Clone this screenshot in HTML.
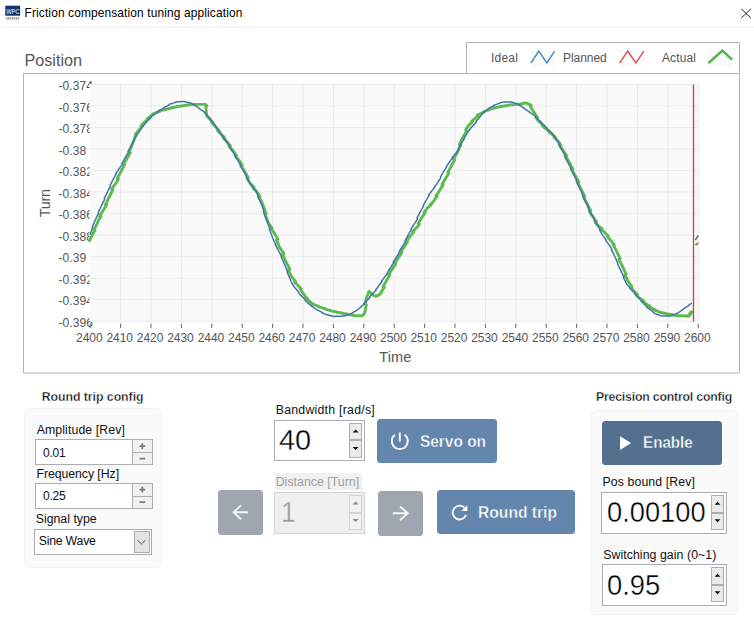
<!DOCTYPE html>
<html><head><meta charset="utf-8"><title>Friction compensation tuning application</title>
<style>
html,body{margin:0;padding:0;background:#fff;}
body{width:754px;height:619px;position:relative;overflow:hidden;font-family:"Liberation Sans",sans-serif;}
.t{position:absolute;white-space:nowrap;font-family:"Liberation Sans",sans-serif;}
.b{position:absolute;box-sizing:border-box;}
</style></head><body>
<svg id="chart" width="754" height="619" viewBox="0 0 754 619" style="position:absolute;left:0;top:0">
<path d="M23.5 73.5 H466.5 V42.5 H739.5 V373 H23.5 Z" fill="#fff" stroke="#b2b4bb" stroke-width="1"/>
<path d="M466.5 73.5 H739.5" stroke="#b2b4bb" stroke-width="1" fill="none"/>
</svg>
<div class="b" style="left:40px;top:76px;width:60px;height:260px;overflow:hidden">
<div class="t" style="left:18.5px;top:4.04px;font-size:12px;line-height:12px;color:#555;letter-spacing:0.08px">-0.374</div>
<div class="t" style="left:18.5px;top:25.56px;font-size:12px;line-height:12px;color:#555;letter-spacing:0.08px">-0.376</div>
<div class="t" style="left:18.5px;top:47.08px;font-size:12px;line-height:12px;color:#555;letter-spacing:0.08px">-0.378</div>
<div class="t" style="left:18.5px;top:68.60px;font-size:12px;line-height:12px;color:#555;letter-spacing:0.08px">-0.38</div>
<div class="t" style="left:18.5px;top:90.11px;font-size:12px;line-height:12px;color:#555;letter-spacing:0.08px">-0.382</div>
<div class="t" style="left:18.5px;top:111.63px;font-size:12px;line-height:12px;color:#555;letter-spacing:0.08px">-0.384</div>
<div class="t" style="left:18.5px;top:133.15px;font-size:12px;line-height:12px;color:#555;letter-spacing:0.08px">-0.386</div>
<div class="t" style="left:18.5px;top:154.67px;font-size:12px;line-height:12px;color:#555;letter-spacing:0.08px">-0.388</div>
<div class="t" style="left:18.5px;top:176.19px;font-size:12px;line-height:12px;color:#555;letter-spacing:0.08px">-0.39</div>
<div class="t" style="left:18.5px;top:197.71px;font-size:12px;line-height:12px;color:#555;letter-spacing:0.08px">-0.392</div>
<div class="t" style="left:18.5px;top:219.22px;font-size:12px;line-height:12px;color:#555;letter-spacing:0.08px">-0.394</div>
<div class="t" style="left:18.5px;top:240.74px;font-size:12px;line-height:12px;color:#555;letter-spacing:0.08px">-0.396</div>
</div>
<svg id="plot" width="754" height="619" viewBox="0 0 754 619" style="position:absolute;left:0;top:0">
<rect x="89.5" y="84.5" width="609.2" height="236.70" fill="#fafafa"/>
<path d="M120.60 84.5 V321.2 M151.00 84.5 V321.2 M181.40 84.5 V321.2 M211.80 84.5 V321.2 M242.20 84.5 V321.2 M272.60 84.5 V321.2 M303.00 84.5 V321.2 M333.40 84.5 V321.2 M363.80 84.5 V321.2 M394.20 84.5 V321.2 M424.60 84.5 V321.2 M455.00 84.5 V321.2 M485.40 84.5 V321.2 M515.80 84.5 V321.2 M546.20 84.5 V321.2 M576.60 84.5 V321.2 M607.00 84.5 V321.2 M637.40 84.5 V321.2 M667.80 84.5 V321.2 M698.20 84.5 V321.2 M89.5 84.50 H698.7 M89.5 106.02 H698.7 M89.5 127.54 H698.7 M89.5 149.05 H698.7 M89.5 170.57 H698.7 M89.5 192.09 H698.7 M89.5 213.61 H698.7 M89.5 235.13 H698.7 M89.5 256.65 H698.7 M89.5 278.16 H698.7 M89.5 299.68 H698.7 M89.5 321.20 H698.7" stroke="#eaeaea" stroke-width="1" fill="none"/>
<path d="M90.20 323.6 V328.1 M120.60 323.6 V328.1 M151.00 323.6 V328.1 M181.40 323.6 V328.1 M211.80 323.6 V328.1 M242.20 323.6 V328.1 M272.60 323.6 V328.1 M303.00 323.6 V328.1 M333.40 323.6 V328.1 M363.80 323.6 V328.1 M394.20 323.6 V328.1 M424.60 323.6 V328.1 M455.00 323.6 V328.1 M485.40 323.6 V328.1 M515.80 323.6 V328.1 M546.20 323.6 V328.1 M576.60 323.6 V328.1 M607.00 323.6 V328.1 M637.40 323.6 V328.1 M667.80 323.6 V328.1 M698.20 323.6 V328.1" stroke="#666" stroke-width="1" fill="none"/>
<path d="M89.6 240.5 L89.9 239.9 L90.2 239.3 L90.5 238.8 L90.8 238.2 L91.0 237.6 L91.3 237.1 L91.6 236.5 L91.9 235.9 L92.2 235.3 L92.5 234.8 L92.7 234.2 L93.0 233.6 L93.3 233.0 L93.7 232.5 L94.0 231.9 L94.3 231.3 L94.7 230.7 L95.0 230.2 L93.8 229.6 L94.2 229.0 L94.5 228.5 L94.8 227.9 L95.2 227.3 L95.5 226.7 L95.8 226.2 L96.2 225.6 L96.4 225.0 L96.7 224.4 L96.9 223.9 L97.2 223.3 L97.5 222.7 L97.7 222.1 L98.0 221.5 L98.3 221.0 L98.5 220.4 L98.8 219.8 L99.1 219.2 L99.5 218.7 L99.8 218.2 L100.2 217.6 L100.5 217.1 L100.9 216.5 L99.7 216.0 L100.1 215.4 L100.4 214.8 L100.7 214.3 L101.1 213.8 L101.4 213.2 L101.8 212.7 L102.1 212.1 L102.5 211.6 L102.8 211.0 L103.2 210.4 L103.5 209.9 L103.9 209.3 L104.2 208.8 L104.5 208.2 L104.9 207.7 L105.2 207.1 L105.6 206.6 L105.9 206.0 L106.3 205.5 L106.6 204.9 L105.5 204.4 L105.8 203.8 L106.1 203.2 L106.4 202.7 L106.7 202.1 L106.9 201.6 L107.2 201.0 L107.5 200.4 L107.8 199.9 L108.1 199.3 L108.3 198.7 L108.6 198.2 L108.9 197.6 L109.2 197.1 L109.5 196.5 L109.7 195.9 L110.0 195.4 L110.3 194.8 L110.6 194.3 L110.9 193.7 L111.1 193.1 L111.4 192.6 L111.7 192.0 L112.0 191.4 L112.3 190.9 L112.5 190.3 L112.8 189.8 L111.6 189.2 L112.0 188.7 L112.4 188.1 L112.8 187.6 L113.1 187.0 L113.5 186.5 L113.9 185.9 L114.3 185.4 L114.7 184.9 L115.1 184.3 L115.5 183.8 L115.9 183.2 L116.2 182.7 L116.6 182.1 L116.9 181.6 L117.2 181.0 L117.5 180.4 L117.9 179.8 L118.2 179.3 L118.5 178.7 L117.3 178.1 L117.6 177.6 L118.0 177.0 L118.3 176.4 L118.6 175.8 L118.9 175.3 L119.3 174.7 L119.6 174.1 L119.9 173.5 L120.2 173.0 L120.5 172.4 L120.8 171.8 L121.1 171.2 L121.4 170.6 L121.7 170.1 L122.0 169.5 L122.4 168.9 L122.7 168.3 L123.0 167.7 L123.3 167.2 L123.6 166.6 L123.9 166.0 L124.2 165.4 L124.6 164.9 L123.4 164.3 L123.8 163.8 L124.1 163.2 L124.5 162.6 L124.8 162.1 L125.2 161.5 L125.5 160.9 L125.9 160.4 L126.2 159.8 L126.6 159.3 L126.9 158.7 L127.2 158.1 L127.5 157.6 L127.8 157.0 L128.1 156.5 L128.5 155.9 L128.8 155.4 L129.1 154.8 L129.4 154.3 L129.7 153.7 L130.0 153.2 L130.3 152.6 L129.1 152.1 L129.4 151.5 L129.7 150.9 L129.9 150.3 L130.1 149.8 L130.3 149.2 L130.6 148.6 L130.8 148.0 L131.0 147.4 L131.2 146.8 L131.5 146.3 L131.7 145.7 L131.9 145.1 L132.2 144.5 L132.4 143.9 L132.6 143.4 L132.8 142.8 L133.1 142.2 L133.3 141.6 L133.5 141.0 L133.8 140.5 L134.0 139.9 L134.2 139.3 L134.4 138.7 L134.7 138.1 L134.9 137.5 L135.1 137.0 L135.3 136.4 L135.6 135.8 L136.0 135.3 L136.4 134.8 L135.3 134.3 L135.8 133.8 L136.2 133.3 L136.6 132.8 L137.0 132.3 L137.4 131.8 L137.9 131.3 L138.3 130.8 L138.7 130.3 L139.1 129.8 L139.6 129.3 L140.0 128.8 L140.4 128.3 L140.8 127.8 L141.2 127.3 L141.7 126.8 L142.1 126.3 L141.0 125.8 L141.4 125.3 L141.8 124.8 L142.3 124.3 L142.7 123.8 L143.1 123.3 L143.7 122.9 L144.2 122.4 L144.8 122.0 L145.3 121.5 L145.9 121.1 L146.4 120.6 L147.0 120.2 L147.5 119.8 L148.1 119.3 L147.2 118.9 L147.7 118.4 L148.3 118.0 L148.8 117.6 L149.4 117.1 L149.9 116.7 L150.5 116.2 L151.0 115.8 L151.6 115.3 L152.1 114.9 L152.8 114.6 L153.5 114.3 L152.7 114.1 L153.4 113.8 L154.1 113.5 L154.8 113.2 L155.5 112.9 L156.2 112.7 L156.9 112.4 L157.6 112.1 L158.3 111.8 L159.0 111.5 L159.7 111.3 L158.9 111.0 L159.6 110.7 L160.3 110.6 L161.1 110.4 L161.8 110.3 L162.6 110.1 L163.3 110.0 L164.1 109.8 L164.8 109.7 L165.6 109.6 L164.8 109.4 L165.6 109.3 L166.3 109.1 L167.1 109.0 L167.8 108.8 L168.6 108.7 L169.3 108.5 L170.1 108.4 L170.8 108.2 L171.6 108.1 L170.8 108.0 L171.6 107.8 L172.3 107.7 L173.0 107.5 L173.8 107.3 L174.5 107.2 L175.3 107.0 L176.0 106.9 L176.8 106.8 L177.5 106.6 L176.8 106.5 L177.5 106.4 L178.3 106.3 L179.0 106.3 L179.8 106.2 L180.5 106.1 L181.3 106.0 L182.0 105.9 L182.8 105.8 L183.5 105.7 L182.8 105.7 L183.5 105.6 L184.3 105.5 L185.0 105.4 L185.8 105.3 L186.6 105.2 L187.3 105.1 L188.1 105.0 L188.9 104.9 L188.1 104.9 L188.9 104.8 L189.6 104.7 L190.4 104.6 L191.2 104.5 L191.9 104.4 L192.7 104.4 L193.5 104.4 L194.2 104.4 L195.0 104.4 L194.2 104.4 L195.0 104.4 L195.7 104.4 L196.5 104.4 L197.3 104.4 L198.0 104.4 L198.8 104.4 L199.5 104.4 L200.3 104.4 L201.1 104.4 L200.3 104.4 L201.1 104.4 L201.8 104.4 L202.6 104.4 L203.3 104.4 L204.1 104.4 L204.9 104.4 L205.6 104.4 L206.1 105.0 L206.5 105.5 L206.9 106.0 L205.9 106.6 L205.9 107.2 L206.0 107.8 L206.0 108.4 L206.1 109.1 L206.1 109.7 L206.2 110.3 L206.2 110.9 L206.3 111.5 L206.3 112.1 L206.4 112.7 L206.4 113.3 L206.5 114.0 L206.5 114.6 L206.6 115.2 L206.6 115.8 L207.1 116.3 L207.6 116.8 L208.0 117.3 L208.5 117.8 L209.0 118.2 L209.5 118.7 L209.9 119.2 L210.4 119.7 L210.9 120.2 L211.3 120.7 L211.8 121.2 L212.3 121.7 L212.8 122.1 L211.7 122.6 L212.2 123.1 L212.7 123.6 L213.2 124.1 L213.6 124.6 L214.1 125.1 L214.6 125.6 L215.0 126.1 L215.5 126.7 L216.0 127.2 L216.4 127.7 L216.9 128.2 L217.4 128.7 L217.8 129.2 L218.3 129.7 L218.8 130.2 L217.7 130.7 L218.2 131.3 L218.7 131.8 L219.1 132.3 L219.6 132.8 L220.1 133.3 L220.6 133.8 L221.0 134.3 L221.5 134.8 L222.0 135.3 L222.5 135.8 L223.0 136.3 L223.5 136.8 L224.0 137.3 L224.5 137.7 L223.5 138.2 L224.0 138.7 L224.5 139.2 L225.0 139.7 L225.5 140.2 L226.0 140.7 L226.5 141.2 L227.0 141.7 L227.4 142.2 L227.8 142.8 L228.3 143.3 L228.7 143.8 L229.1 144.3 L229.6 144.9 L230.0 145.4 L230.4 145.9 L229.4 146.4 L229.8 147.0 L230.3 147.5 L230.7 148.0 L231.1 148.5 L231.6 149.1 L232.0 149.6 L232.4 150.1 L232.9 150.6 L233.3 151.2 L233.7 151.7 L234.1 152.2 L234.5 152.7 L234.9 153.2 L235.3 153.8 L235.7 154.3 L236.1 154.8 L236.5 155.3 L235.4 155.8 L235.8 156.3 L236.2 156.8 L236.6 157.4 L237.0 157.9 L237.4 158.4 L237.8 158.9 L238.2 159.4 L238.6 159.9 L239.0 160.4 L239.4 161.0 L239.8 161.5 L240.2 162.0 L240.6 162.5 L241.0 163.1 L241.3 163.6 L241.7 164.2 L242.0 164.7 L242.4 165.3 L241.2 165.9 L241.5 166.4 L241.9 167.0 L242.2 167.5 L242.6 168.1 L242.9 168.7 L243.3 169.2 L243.6 169.8 L243.9 170.3 L244.3 170.9 L244.6 171.5 L244.9 172.0 L245.3 172.6 L245.6 173.2 L245.9 173.7 L246.3 174.3 L246.6 174.9 L246.9 175.4 L247.3 176.0 L247.6 176.6 L247.9 177.2 L248.3 177.7 L247.1 178.3 L247.4 178.9 L247.7 179.4 L248.1 180.0 L248.4 180.6 L248.7 181.1 L249.1 181.7 L249.4 182.3 L249.7 182.8 L250.1 183.4 L250.6 183.9 L251.0 184.4 L251.5 184.9 L252.0 185.4 L252.5 185.9 L253.0 186.4 L253.5 186.9 L254.0 187.4 L253.0 187.8 L253.5 188.3 L254.0 188.8 L254.5 189.3 L255.0 189.8 L255.5 190.3 L256.0 190.8 L256.5 191.3 L257.0 191.8 L257.3 192.4 L257.7 192.9 L258.0 193.5 L258.4 194.0 L258.7 194.6 L259.1 195.1 L259.4 195.7 L259.8 196.2 L260.1 196.8 L258.9 197.4 L259.3 197.9 L259.6 198.5 L260.0 199.0 L260.3 199.6 L260.7 200.1 L261.0 200.7 L261.4 201.2 L261.7 201.8 L262.0 202.4 L262.2 203.0 L262.4 203.6 L262.6 204.2 L262.9 204.8 L263.1 205.4 L263.3 206.0 L263.5 206.6 L263.8 207.2 L264.0 207.8 L264.2 208.4 L264.4 209.0 L264.6 209.6 L264.9 210.2 L265.1 210.8 L265.3 211.4 L265.6 211.9 L265.8 212.5 L266.0 213.1 L266.2 213.7 L265.0 214.2 L265.2 214.8 L265.4 215.4 L265.7 216.0 L265.9 216.6 L266.1 217.1 L266.3 217.7 L266.6 218.3 L266.8 218.9 L267.0 219.5 L267.3 220.0 L267.5 220.6 L267.7 221.2 L268.0 221.8 L268.2 222.3 L268.4 222.9 L268.6 223.5 L269.1 224.0 L269.5 224.6 L269.9 225.1 L270.3 225.6 L270.7 226.2 L271.1 226.7 L271.5 227.2 L272.0 227.7 L270.9 228.3 L271.3 228.8 L271.7 229.3 L272.1 229.9 L272.5 230.4 L272.9 231.0 L273.2 231.5 L273.6 232.1 L273.9 232.6 L274.2 233.2 L274.6 233.7 L274.9 234.3 L275.3 234.8 L275.6 235.4 L276.0 235.9 L276.3 236.5 L276.6 237.0 L277.0 237.6 L277.3 238.1 L277.7 238.7 L277.9 239.3 L276.6 239.9 L276.8 240.5 L277.1 241.1 L277.3 241.7 L277.5 242.3 L277.7 242.9 L278.0 243.5 L278.2 244.1 L278.4 244.7 L278.6 245.3 L278.9 245.9 L279.1 246.5 L279.3 247.1 L279.7 247.6 L280.1 248.2 L280.5 248.7 L280.9 249.2 L281.2 249.7 L281.6 250.3 L282.0 250.8 L282.4 251.3 L282.8 251.8 L283.2 252.4 L283.6 252.9 L283.8 253.5 L282.6 254.1 L282.8 254.6 L283.0 255.2 L283.3 255.8 L283.5 256.4 L283.8 256.9 L284.0 257.5 L284.2 258.1 L284.5 258.7 L284.7 259.2 L285.0 259.8 L285.2 260.4 L285.5 261.0 L285.8 261.6 L286.2 262.2 L286.5 262.7 L286.8 263.3 L287.1 263.9 L287.4 264.5 L287.8 265.1 L288.1 265.7 L288.4 266.2 L288.7 266.8 L289.0 267.4 L289.3 268.0 L289.6 268.6 L289.8 269.2 L288.6 269.7 L288.8 270.3 L289.1 270.9 L289.3 271.5 L289.5 272.0 L289.8 272.6 L290.0 273.2 L290.3 273.8 L290.5 274.3 L290.7 274.9 L291.0 275.5 L291.4 276.0 L291.8 276.6 L292.1 277.1 L292.5 277.6 L292.9 278.1 L293.3 278.7 L293.7 279.2 L294.1 279.7 L294.5 280.2 L294.9 280.8 L295.2 281.3 L295.7 281.8 L294.7 282.3 L295.2 282.8 L295.7 283.3 L296.2 283.8 L296.7 284.3 L297.2 284.8 L297.7 285.3 L298.2 285.7 L298.7 286.2 L299.2 286.7 L299.7 287.2 L300.2 287.7 L300.7 288.2 L301.2 288.7 L300.2 289.2 L300.7 289.7 L301.0 290.2 L301.4 290.8 L301.8 291.3 L302.1 291.8 L302.5 292.4 L302.9 292.9 L303.2 293.4 L303.6 294.0 L304.0 294.5 L304.3 295.1 L304.7 295.6 L305.1 296.1 L305.4 296.7 L305.8 297.2 L306.4 297.6 L306.9 298.1 L307.5 298.5 L306.5 299.0 L307.1 299.4 L307.7 299.9 L308.2 300.3 L308.8 300.8 L309.3 301.2 L309.9 301.7 L310.5 302.1 L311.0 302.6 L311.6 303.0 L312.1 303.5 L312.7 303.9 L313.4 304.1 L312.6 304.3 L313.3 304.6 L314.0 304.8 L314.7 305.0 L315.4 305.2 L316.1 305.4 L316.8 305.7 L317.5 305.9 L318.2 306.1 L318.9 306.3 L318.1 306.5 L318.8 306.8 L319.5 307.0 L320.2 307.2 L321.0 307.4 L321.7 307.6 L322.5 307.8 L323.2 308.1 L324.0 308.3 L324.7 308.5 L323.9 308.7 L324.7 308.9 L325.4 309.1 L326.2 309.3 L326.9 309.6 L327.7 309.8 L328.4 310.0 L329.1 310.2 L329.9 310.3 L330.6 310.5 L329.9 310.6 L330.7 310.8 L331.4 310.9 L332.2 311.1 L332.9 311.2 L333.7 311.3 L334.4 311.5 L335.2 311.6 L335.9 311.8 L336.7 311.9 L335.9 312.1 L336.7 312.2 L337.4 312.3 L338.2 312.4 L338.9 312.6 L339.7 312.7 L340.4 312.8 L341.2 312.9 L341.9 313.0 L342.7 313.2 L342.0 313.3 L342.7 313.4 L343.5 313.5 L344.2 313.7 L345.0 313.8 L345.7 313.9 L346.5 314.0 L347.2 314.1 L347.9 314.3 L348.7 314.4 L347.9 314.5 L348.7 314.6 L349.4 314.8 L350.2 314.9 L350.9 315.0 L351.7 315.1 L352.4 315.2 L353.1 315.4 L353.9 315.5 L354.6 315.6 L353.9 315.6 L354.6 315.6 L355.4 315.7 L356.1 315.7 L356.9 315.7 L357.6 315.7 L358.4 315.8 L359.1 315.8 L359.9 315.8 L360.6 315.8 L359.9 315.8 L360.7 315.9 L361.4 315.9 L362.2 315.9 L362.7 315.3 L363.2 314.8 L363.7 314.2 L364.2 313.7 L364.7 313.1 L364.8 312.5 L364.9 311.9 L365.0 311.3 L365.2 310.7 L365.3 310.1 L365.4 309.5 L365.5 308.9 L365.7 308.3 L365.8 307.7 L365.9 307.1 L366.0 306.5 L366.2 305.9 L366.3 305.3 L366.4 304.7 L365.1 304.1 L365.2 303.5 L365.3 302.9 L365.4 302.3 L365.6 301.7 L365.7 301.1 L365.8 300.5 L366.0 299.9 L366.2 299.3 L366.4 298.7 L366.6 298.1 L366.8 297.5 L367.1 296.9 L367.3 296.3 L367.5 295.6 L367.7 295.0 L367.9 294.4 L368.1 293.8 L368.3 293.2 L368.5 292.6 L368.7 292.0 L368.9 291.4 L369.5 291.8 L370.0 292.2 L370.6 292.6 L371.1 293.1 L371.7 293.5 L372.2 293.9 L371.3 294.2 L372.0 294.5 L372.6 294.8 L373.3 295.1 L373.9 295.5 L374.6 295.8 L375.2 296.1 L375.8 296.4 L376.6 296.2 L377.3 295.9 L378.1 295.7 L377.4 295.4 L378.1 295.2 L378.9 294.9 L379.6 294.7 L380.0 294.1 L380.3 293.6 L380.7 293.0 L381.0 292.5 L381.4 291.9 L381.7 291.3 L382.1 290.8 L382.4 290.2 L382.8 289.7 L383.1 289.1 L383.5 288.5 L383.8 288.0 L384.2 287.4 L383.0 286.9 L383.4 286.3 L383.7 285.7 L384.0 285.2 L384.3 284.6 L384.6 284.0 L384.9 283.4 L385.3 282.9 L385.6 282.3 L385.9 281.7 L386.2 281.1 L386.5 280.6 L386.8 280.0 L387.1 279.4 L387.5 278.8 L387.8 278.2 L388.1 277.7 L388.4 277.1 L388.8 276.6 L389.1 276.0 L389.5 275.5 L389.8 275.0 L388.7 274.4 L389.0 273.9 L389.4 273.4 L389.8 272.8 L390.1 272.3 L390.5 271.8 L390.8 271.2 L391.2 270.7 L391.5 270.2 L391.9 269.6 L392.3 269.1 L392.6 268.6 L393.0 268.0 L393.3 267.5 L393.7 267.0 L394.0 266.4 L394.4 265.9 L394.8 265.4 L395.1 264.8 L395.5 264.3 L395.8 263.8 L394.7 263.2 L395.0 262.7 L395.4 262.2 L395.8 261.6 L396.1 261.1 L396.5 260.6 L396.8 260.0 L397.2 259.5 L397.5 259.0 L397.9 258.4 L398.3 257.9 L398.6 257.4 L399.0 256.8 L399.3 256.3 L399.7 255.8 L400.0 255.2 L400.4 254.7 L400.8 254.2 L401.1 253.6 L401.5 253.1 L401.8 252.6 L400.7 252.0 L401.0 251.5 L401.4 251.0 L401.8 250.4 L402.1 249.9 L402.5 249.4 L402.8 248.8 L403.2 248.3 L403.5 247.8 L403.9 247.2 L404.3 246.7 L404.6 246.2 L405.0 245.6 L405.3 245.1 L405.7 244.6 L406.0 244.0 L406.4 243.5 L406.8 243.0 L407.1 242.4 L407.5 241.9 L406.4 241.4 L406.8 240.9 L407.1 240.3 L407.5 239.8 L407.9 239.3 L408.3 238.8 L408.7 238.3 L409.1 237.8 L409.5 237.2 L409.9 236.7 L410.3 236.2 L410.7 235.7 L411.1 235.2 L411.5 234.6 L411.9 234.1 L412.2 233.6 L412.7 233.1 L413.2 232.6 L413.7 232.1 L412.7 231.6 L413.2 231.1 L413.7 230.6 L414.1 230.1 L414.6 229.6 L415.1 229.1 L415.6 228.6 L416.1 228.1 L416.6 227.6 L417.0 227.1 L417.5 226.6 L418.0 226.1 L418.4 225.5 L418.7 225.0 L419.1 224.4 L419.4 223.9 L418.3 223.3 L418.6 222.7 L419.0 222.2 L419.3 221.6 L419.7 221.1 L420.0 220.5 L420.4 219.9 L420.7 219.4 L421.0 218.8 L421.4 218.2 L421.7 217.7 L422.1 217.1 L422.4 216.6 L422.8 216.0 L423.2 215.5 L423.6 215.0 L424.0 214.4 L424.4 213.9 L424.8 213.4 L425.2 212.9 L424.1 212.4 L424.5 211.8 L424.9 211.3 L425.3 210.8 L425.7 210.3 L426.1 209.8 L426.5 209.3 L426.9 208.7 L427.3 208.2 L427.7 207.7 L428.3 207.2 L428.8 206.8 L429.4 206.3 L430.0 205.9 L430.5 205.4 L431.1 205.0 L430.2 204.5 L430.7 204.1 L431.3 203.6 L431.9 203.2 L432.5 202.7 L432.8 202.2 L433.2 201.6 L433.6 201.1 L434.0 200.6 L434.4 200.0 L434.8 199.5 L435.1 199.0 L435.5 198.4 L435.9 197.9 L436.3 197.4 L436.7 196.9 L437.1 196.3 L435.9 195.8 L436.3 195.3 L436.7 194.7 L437.1 194.2 L437.5 193.7 L437.9 193.1 L438.2 192.6 L438.6 192.0 L438.9 191.5 L439.3 190.9 L439.6 190.4 L440.0 189.8 L440.3 189.3 L440.7 188.7 L441.0 188.2 L441.4 187.6 L441.7 187.0 L442.1 186.5 L442.4 185.9 L442.8 185.4 L443.1 184.8 L442.0 184.3 L442.3 183.7 L442.7 183.2 L443.0 182.6 L443.4 182.0 L443.7 181.5 L444.0 180.9 L444.4 180.4 L444.7 179.8 L445.1 179.3 L445.4 178.7 L445.8 178.2 L446.1 177.6 L446.5 177.0 L446.8 176.5 L447.2 175.9 L447.5 175.4 L447.9 174.8 L448.2 174.3 L448.6 173.7 L448.9 173.2 L447.8 172.6 L448.1 172.0 L448.4 171.5 L448.7 170.9 L449.0 170.3 L449.3 169.8 L449.6 169.2 L449.9 168.6 L450.2 168.1 L450.5 167.5 L450.8 167.0 L451.1 166.4 L451.4 165.8 L451.7 165.3 L452.0 164.7 L452.3 164.1 L452.6 163.6 L452.9 163.0 L453.2 162.4 L453.5 161.9 L453.8 161.3 L454.2 160.8 L454.5 160.2 L454.8 159.7 L453.6 159.1 L453.9 158.6 L454.2 158.0 L454.5 157.5 L454.8 156.9 L455.1 156.4 L455.5 155.8 L455.8 155.3 L456.1 154.7 L456.4 154.2 L456.7 153.6 L457.0 153.1 L457.3 152.5 L457.6 151.9 L457.8 151.4 L458.1 150.8 L458.4 150.2 L458.6 149.7 L458.9 149.1 L459.1 148.5 L459.4 148.0 L459.7 147.4 L459.9 146.8 L460.2 146.3 L460.4 145.7 L460.7 145.1 L459.5 144.5 L459.7 144.0 L460.0 143.4 L460.2 142.8 L460.5 142.3 L460.8 141.7 L461.0 141.1 L461.3 140.6 L461.6 140.0 L461.8 139.4 L462.1 138.9 L462.3 138.3 L462.7 137.8 L463.0 137.2 L463.3 136.7 L463.6 136.1 L463.9 135.6 L464.3 135.0 L464.6 134.5 L464.9 134.0 L465.2 133.4 L465.6 132.9 L465.9 132.3 L466.2 131.8 L466.5 131.2 L466.8 130.7 L465.7 130.1 L466.0 129.6 L466.3 129.1 L466.6 128.5 L466.9 128.0 L467.3 127.4 L467.6 126.9 L467.9 126.3 L468.2 125.8 L468.8 125.3 L469.3 124.9 L469.8 124.4 L470.3 123.9 L470.9 123.5 L471.4 123.0 L471.9 122.5 L472.4 122.0 L471.5 121.6 L472.0 121.1 L472.5 120.6 L473.0 120.2 L473.6 119.7 L474.1 119.2 L474.6 118.8 L475.1 118.3 L475.7 117.8 L476.3 117.3 L476.9 116.8 L477.5 116.4 L478.1 115.9 L477.2 115.4 L477.8 114.9 L478.5 114.6 L479.2 114.3 L479.9 114.0 L480.6 113.7 L481.3 113.4 L482.0 113.1 L482.7 112.8 L483.4 112.5 L484.1 112.2 L483.3 111.9 L484.0 111.6 L484.7 111.3 L485.4 111.0 L486.1 110.7 L486.8 110.4 L487.6 110.2 L488.3 110.0 L489.0 109.8 L489.8 109.6 L489.0 109.4 L489.8 109.2 L490.5 109.1 L491.3 108.9 L492.0 108.7 L492.7 108.5 L493.5 108.3 L494.2 108.1 L495.0 107.9 L495.7 107.7 L495.0 107.6 L495.7 107.5 L496.5 107.4 L497.2 107.2 L498.0 107.1 L498.7 107.0 L499.5 106.9 L500.2 106.8 L501.0 106.7 L501.7 106.6 L501.0 106.4 L501.8 106.3 L502.5 106.2 L503.3 106.1 L504.0 106.0 L504.7 105.9 L505.5 105.8 L506.2 105.7 L507.0 105.6 L507.7 105.5 L507.0 105.4 L507.7 105.3 L508.5 105.2 L509.2 105.1 L509.9 105.0 L510.7 104.9 L511.4 104.8 L512.2 104.7 L512.9 104.7 L513.7 104.6 L512.9 104.6 L513.7 104.5 L514.4 104.5 L515.2 104.4 L515.9 104.4 L516.7 104.4 L517.4 104.3 L518.2 104.3 L518.9 104.2 L519.7 104.2 L519.0 104.1 L519.7 104.1 L520.5 103.9 L521.3 103.8 L522.1 103.6 L522.9 103.5 L523.7 103.3 L524.6 103.2 L525.4 103.0 L524.7 102.9 L525.5 102.7 L526.2 103.0 L527.0 103.3 L527.7 103.6 L528.5 104.0 L529.2 104.3 L530.0 104.6 L530.7 104.9 L531.1 105.5 L531.4 106.0 L530.3 106.6 L530.7 107.1 L531.0 107.7 L531.4 108.2 L531.7 108.8 L532.1 109.3 L532.4 109.9 L532.8 110.4 L533.1 111.0 L533.5 111.5 L533.8 112.1 L534.2 112.6 L534.5 113.2 L534.9 113.7 L535.3 114.3 L535.6 114.8 L536.0 115.4 L536.4 115.9 L536.8 116.5 L537.1 117.0 L537.5 117.5 L536.4 118.1 L536.8 118.6 L537.2 119.2 L537.5 119.7 L537.9 120.3 L538.3 120.8 L538.8 121.3 L539.3 121.7 L539.9 122.2 L540.4 122.7 L540.9 123.1 L541.4 123.6 L542.0 124.1 L542.5 124.6 L543.0 125.0 L543.5 125.5 L542.6 126.0 L543.1 126.4 L543.6 126.9 L544.1 127.4 L544.7 127.8 L545.2 128.3 L545.8 128.7 L546.4 129.1 L547.0 129.5 L547.6 130.0 L548.1 130.4 L548.7 130.8 L549.3 131.2 L548.4 131.6 L549.0 132.0 L549.6 132.4 L550.2 132.9 L550.8 133.3 L551.4 133.7 L552.0 134.1 L552.5 134.6 L553.0 135.1 L553.5 135.5 L554.1 136.0 L554.6 136.5 L555.1 137.0 L554.2 137.4 L554.7 137.9 L555.2 138.4 L555.7 138.9 L556.3 139.4 L556.8 139.8 L557.3 140.3 L557.9 140.8 L558.2 141.3 L558.6 141.9 L559.0 142.4 L559.4 142.9 L559.7 143.5 L560.1 144.0 L560.5 144.6 L560.9 145.1 L559.8 145.6 L560.1 146.2 L560.5 146.7 L560.9 147.2 L561.3 147.8 L561.6 148.3 L562.0 148.8 L562.4 149.4 L562.7 149.9 L563.1 150.5 L563.5 151.0 L563.8 151.5 L564.2 152.1 L564.6 152.6 L565.0 153.2 L565.3 153.7 L565.7 154.3 L566.1 154.8 L566.4 155.3 L566.8 155.9 L565.7 156.4 L566.0 157.0 L566.4 157.5 L566.7 158.1 L567.1 158.7 L567.4 159.3 L567.8 159.9 L568.1 160.5 L568.5 161.0 L568.8 161.6 L569.1 162.2 L569.5 162.8 L569.8 163.4 L570.2 164.0 L570.5 164.6 L570.8 165.1 L571.1 165.7 L571.4 166.2 L571.7 166.8 L572.0 167.3 L572.4 167.8 L572.7 168.4 L573.0 168.9 L571.8 169.5 L572.1 170.0 L572.4 170.6 L572.7 171.1 L573.1 171.7 L573.4 172.3 L573.7 172.8 L574.0 173.4 L574.3 173.9 L574.6 174.5 L574.9 175.0 L575.2 175.6 L575.5 176.2 L575.8 176.7 L576.1 177.3 L576.4 177.8 L576.8 178.4 L577.1 179.0 L577.4 179.5 L577.7 180.1 L578.0 180.6 L578.3 181.2 L578.6 181.8 L578.9 182.3 L577.7 182.9 L578.0 183.4 L578.3 184.0 L578.6 184.5 L579.0 185.1 L579.2 185.7 L579.5 186.2 L579.8 186.8 L580.1 187.4 L580.4 187.9 L580.7 188.5 L581.0 189.1 L581.3 189.6 L581.6 190.2 L581.9 190.8 L582.2 191.3 L582.4 191.9 L582.7 192.5 L583.0 193.1 L583.3 193.6 L583.6 194.2 L583.9 194.8 L584.2 195.3 L584.5 195.9 L584.8 196.5 L583.6 197.0 L583.9 197.6 L584.1 198.2 L584.4 198.7 L584.7 199.3 L585.0 199.9 L585.3 200.4 L585.6 201.0 L585.9 201.6 L586.2 202.1 L586.5 202.7 L586.8 203.3 L587.1 203.8 L587.4 204.4 L587.7 205.0 L588.0 205.5 L588.3 206.1 L588.6 206.7 L588.9 207.3 L589.2 207.8 L589.5 208.4 L589.8 209.0 L590.1 209.5 L590.4 210.1 L590.6 210.7 L589.4 211.2 L589.7 211.8 L590.0 212.4 L590.3 212.9 L590.6 213.5 L591.0 214.0 L591.4 214.6 L591.8 215.1 L592.2 215.6 L592.5 216.2 L592.9 216.7 L593.3 217.2 L593.7 217.8 L594.1 218.3 L594.4 218.8 L594.8 219.3 L595.2 219.9 L595.6 220.4 L596.0 220.9 L596.4 221.5 L595.2 222.0 L595.6 222.5 L596.0 223.1 L596.4 223.6 L596.8 224.1 L597.2 224.7 L597.5 225.2 L598.1 225.6 L598.7 226.1 L599.2 226.5 L599.8 227.0 L600.3 227.4 L600.9 227.9 L601.5 228.3 L602.0 228.8 L601.1 229.2 L601.6 229.7 L602.2 230.1 L602.7 230.6 L603.3 231.0 L603.8 231.5 L604.3 232.0 L604.8 232.5 L605.2 233.0 L605.7 233.5 L606.2 234.0 L606.7 234.5 L607.2 235.0 L607.7 235.5 L608.2 236.0 L607.1 236.5 L607.6 237.0 L608.1 237.5 L608.6 238.0 L609.1 238.5 L609.5 239.0 L609.9 239.5 L610.4 240.0 L610.8 240.5 L611.2 241.0 L611.6 241.5 L612.1 242.0 L612.5 242.6 L612.9 243.1 L613.3 243.6 L613.8 244.1 L614.2 244.6 L613.1 245.1 L613.6 245.6 L614.0 246.1 L614.3 246.7 L614.5 247.2 L614.8 247.8 L615.1 248.4 L615.4 248.9 L615.6 249.5 L615.9 250.1 L616.2 250.6 L616.5 251.2 L616.8 251.7 L617.0 252.3 L617.3 252.9 L617.6 253.4 L617.9 254.0 L618.2 254.6 L618.4 255.1 L618.7 255.7 L619.0 256.3 L619.3 256.9 L619.6 257.4 L619.9 258.0 L620.2 258.6 L618.9 259.1 L619.2 259.7 L619.5 260.3 L619.8 260.9 L620.1 261.4 L620.4 262.0 L620.7 262.6 L620.9 263.2 L621.2 263.7 L621.5 264.3 L621.8 264.9 L622.0 265.4 L622.3 266.0 L622.6 266.6 L622.8 267.2 L623.1 267.8 L623.4 268.3 L623.6 268.9 L623.9 269.5 L624.2 270.1 L624.4 270.6 L624.7 271.2 L625.0 271.8 L625.2 272.4 L625.5 272.9 L625.8 273.5 L626.1 274.1 L624.9 274.7 L625.2 275.3 L625.5 275.9 L625.8 276.5 L626.0 277.1 L626.3 277.6 L626.6 278.2 L626.9 278.8 L627.2 279.4 L627.5 280.0 L627.8 280.6 L628.1 281.2 L628.4 281.8 L628.8 282.3 L629.2 282.9 L629.6 283.4 L630.0 283.9 L630.4 284.4 L630.8 284.9 L631.2 285.5 L631.5 286.0 L631.9 286.5 L630.8 287.1 L631.2 287.6 L631.6 288.1 L632.0 288.6 L632.4 289.1 L632.8 289.7 L633.2 290.2 L633.7 290.7 L634.2 291.2 L634.7 291.7 L635.2 292.2 L635.7 292.7 L636.1 293.2 L636.6 293.7 L637.1 294.2 L637.6 294.7 L636.6 295.2 L637.1 295.7 L637.6 296.2 L638.1 296.7 L638.6 297.2 L639.1 297.7 L639.7 298.1 L640.3 298.5 L640.8 299.0 L641.4 299.4 L642.0 299.8 L642.6 300.2 L643.2 300.6 L643.8 301.0 L642.9 301.5 L643.5 301.9 L644.1 302.3 L644.6 302.7 L645.2 303.1 L645.8 303.6 L646.4 304.0 L647.0 304.4 L647.6 304.8 L648.3 305.2 L648.9 305.6 L649.6 305.9 L648.7 306.3 L649.4 306.7 L650.0 307.1 L650.7 307.5 L651.3 307.9 L652.0 308.2 L652.6 308.6 L653.2 309.0 L653.9 309.4 L654.6 309.6 L655.3 309.9 L654.5 310.1 L655.2 310.4 L655.9 310.6 L656.6 310.9 L657.3 311.1 L658.0 311.4 L658.7 311.6 L659.4 311.9 L660.1 312.1 L660.8 312.4 L661.5 312.5 L660.8 312.6 L661.5 312.8 L662.3 312.9 L663.0 313.0 L663.8 313.1 L664.5 313.2 L665.2 313.4 L666.0 313.5 L666.7 313.6 L666.0 313.7 L666.7 313.9 L667.5 314.0 L668.2 314.1 L669.0 314.2 L669.7 314.3 L670.5 314.4 L671.2 314.5 L672.0 314.6 L672.7 314.7 L672.0 314.9 L672.7 315.0 L673.5 315.1 L674.2 315.2 L675.0 315.3 L675.7 315.4 L676.5 315.5 L677.2 315.6 L678.0 315.6 L678.8 315.7 L678.1 315.7 L678.8 315.7 L679.6 315.7 L680.4 315.8 L681.1 315.8 L681.9 315.8 L682.7 315.8 L683.5 315.9 L684.2 315.9 L685.0 315.9 L684.3 315.9 L685.1 316.0 L685.8 316.0 L686.6 316.0 L687.4 316.0 L688.1 316.1 L688.9 316.1 L689.4 315.5 L689.8 315.0 L690.3 314.4 L690.7 313.9 L689.7 313.3 L690.1 312.8 L690.6 312.2 L691.6 312.0 L692.6 311.9 " stroke="#5dba50" stroke-width="2.9" fill="none" stroke-linejoin="round" stroke-linecap="round"/><path d="M695.3 245.1 L698.3 243" stroke="#5dba50" stroke-width="2.2" fill="none"/>
<path d="M90.0 234.8 L90.2 234.2 L90.4 233.6 L90.7 233.0 L90.9 232.4 L91.1 231.8 L91.3 231.2 L91.5 230.7 L91.7 230.1 L91.9 229.5 L92.1 228.9 L92.3 228.3 L92.5 227.7 L92.8 227.1 L92.3 226.6 L92.6 226.0 L92.8 225.4 L93.1 224.9 L93.4 224.3 L93.6 223.7 L93.9 223.2 L94.1 222.6 L94.4 222.0 L94.7 221.5 L94.9 220.9 L95.2 220.3 L95.4 219.7 L95.7 219.2 L96.0 218.6 L96.2 218.0 L96.5 217.5 L96.7 216.9 L97.0 216.3 L97.2 215.8 L97.5 215.2 L97.8 214.6 L98.0 214.1 L98.3 213.5 L98.6 212.9 L98.8 212.4 L98.4 211.8 L98.7 211.3 L99.0 210.7 L99.2 210.2 L99.5 209.6 L99.8 209.1 L100.1 208.5 L100.3 208.0 L100.6 207.4 L100.9 206.8 L101.2 206.3 L101.4 205.7 L101.7 205.2 L102.0 204.6 L102.3 204.1 L102.5 203.5 L102.8 203.0 L103.1 202.4 L103.4 201.9 L103.6 201.3 L103.9 200.8 L104.2 200.2 L104.5 199.6 L104.7 199.1 L104.3 198.5 L104.6 198.0 L104.8 197.4 L105.1 196.8 L105.4 196.3 L105.6 195.7 L105.9 195.2 L106.2 194.6 L106.5 194.1 L106.7 193.5 L107.0 192.9 L107.3 192.4 L107.5 191.8 L107.8 191.3 L108.1 190.7 L108.4 190.2 L108.6 189.6 L108.9 189.0 L109.2 188.5 L109.4 187.9 L109.7 187.4 L110.0 186.8 L110.3 186.3 L110.5 185.7 L110.1 185.2 L110.4 184.6 L110.7 184.1 L111.0 183.5 L111.3 183.0 L111.6 182.5 L111.9 181.9 L112.1 181.4 L112.4 180.8 L112.7 180.3 L113.0 179.7 L113.3 179.2 L113.6 178.6 L113.9 178.1 L114.2 177.6 L114.4 177.0 L114.7 176.5 L115.0 175.9 L115.3 175.4 L115.6 174.8 L115.9 174.3 L116.2 173.8 L115.9 173.3 L116.3 172.8 L116.6 172.3 L117.0 171.7 L117.3 171.2 L117.7 170.7 L118.1 170.2 L118.4 169.7 L118.8 169.2 L119.1 168.7 L119.5 168.2 L119.9 167.7 L120.2 167.1 L120.6 166.6 L120.9 166.1 L121.3 165.6 L121.7 165.1 L122.0 164.6 L122.3 164.0 L121.9 163.5 L122.2 162.9 L122.5 162.4 L122.8 161.8 L123.1 161.3 L123.4 160.7 L123.7 160.2 L124.1 159.7 L124.4 159.1 L124.7 158.6 L125.0 158.0 L125.3 157.5 L125.6 156.9 L125.9 156.4 L126.2 155.9 L126.5 155.3 L126.8 154.8 L127.1 154.2 L127.4 153.7 L127.8 153.1 L128.1 152.6 L128.4 152.0 L128.0 151.5 L128.3 150.9 L128.6 150.4 L128.9 149.8 L129.2 149.3 L129.5 148.8 L129.9 148.2 L130.2 147.7 L130.5 147.1 L130.8 146.6 L131.1 146.0 L131.4 145.4 L131.7 144.9 L132.1 144.3 L132.4 143.8 L132.7 143.2 L133.0 142.7 L133.3 142.2 L133.6 141.6 L133.9 141.1 L134.2 140.5 L133.9 139.9 L134.2 139.4 L134.5 138.8 L134.8 138.3 L135.1 137.8 L135.4 137.2 L135.7 136.7 L136.1 136.1 L136.4 135.6 L136.7 135.0 L137.1 134.5 L137.5 134.0 L137.9 133.5 L138.2 133.1 L138.6 132.6 L139.0 132.1 L139.4 131.6 L139.8 131.1 L139.5 130.6 L139.9 130.1 L140.3 129.6 L140.7 129.2 L141.1 128.7 L141.5 128.2 L141.9 127.7 L142.2 127.2 L142.6 126.7 L143.0 126.2 L143.4 125.7 L143.8 125.2 L144.2 124.8 L144.6 124.3 L145.0 123.8 L145.4 123.3 L145.9 122.9 L145.7 122.4 L146.1 122.0 L146.6 121.5 L147.1 121.1 L147.6 120.6 L148.1 120.2 L148.6 119.8 L149.1 119.3 L149.6 118.9 L150.1 118.4 L150.5 118.0 L151.0 117.6 L151.5 117.1 L151.3 116.7 L151.8 116.2 L152.3 115.8 L152.8 115.3 L153.3 114.9 L153.8 114.6 L154.4 114.2 L154.9 113.9 L155.5 113.5 L156.0 113.2 L156.6 112.9 L157.1 112.5 L157.7 112.2 L157.5 111.8 L158.1 111.5 L158.6 111.1 L159.2 110.8 L159.7 110.5 L160.3 110.1 L160.9 109.8 L161.4 109.4 L162.0 109.1 L162.5 108.8 L163.1 108.5 L163.7 108.2 L163.6 107.8 L164.2 107.5 L164.7 107.2 L165.3 106.9 L165.9 106.6 L166.5 106.3 L167.1 106.0 L167.6 105.7 L168.2 105.3 L168.8 105.0 L169.4 104.7 L169.3 104.4 L169.8 104.1 L170.5 103.9 L171.2 103.7 L171.9 103.5 L172.6 103.3 L173.2 103.1 L173.9 102.9 L174.6 102.7 L175.3 102.5 L175.3 102.3 L176.0 102.1 L176.6 101.9 L177.3 101.9 L178.0 101.8 L178.7 101.8 L179.4 101.8 L180.0 101.7 L180.7 101.7 L181.4 101.6 L181.4 101.6 L182.1 101.6 L182.7 101.5 L183.4 101.5 L184.1 101.6 L184.8 101.8 L185.5 101.9 L186.2 102.0 L186.8 102.1 L186.8 102.3 L187.5 102.4 L188.2 102.5 L188.9 102.6 L189.5 102.8 L190.2 102.9 L190.9 103.2 L191.5 103.5 L192.1 103.8 L192.7 104.1 L192.6 104.4 L193.3 104.8 L193.9 105.1 L194.5 105.4 L195.1 105.7 L195.8 106.0 L196.4 106.3 L197.0 106.6 L197.6 107.0 L198.2 107.4 L198.8 107.8 L198.6 108.1 L199.2 108.5 L199.8 108.9 L200.4 109.3 L200.9 109.7 L201.5 110.1 L202.1 110.4 L202.7 110.8 L203.2 111.2 L203.8 111.6 L204.3 112.1 L204.8 112.5 L204.6 113.0 L205.2 113.5 L205.7 113.9 L206.2 114.4 L206.7 114.9 L207.2 115.3 L207.7 115.8 L208.1 116.3 L208.6 116.8 L209.0 117.3 L209.5 117.8 L209.9 118.3 L210.3 118.8 L210.8 119.3 L210.5 119.8 L211.0 120.3 L211.4 120.8 L211.8 121.3 L212.3 121.8 L212.7 122.3 L213.2 122.8 L213.6 123.3 L214.0 123.8 L214.4 124.3 L214.9 124.8 L215.3 125.3 L215.7 125.9 L216.1 126.4 L216.5 126.9 L216.2 127.4 L216.6 127.9 L217.1 128.4 L217.5 128.9 L217.9 129.4 L218.3 129.9 L218.7 130.5 L219.1 131.0 L219.6 131.5 L220.0 132.0 L220.4 132.5 L220.8 133.0 L221.1 133.5 L221.5 134.0 L221.9 134.5 L222.3 135.0 L222.6 135.5 L222.3 136.0 L222.7 136.5 L223.0 137.0 L223.4 137.5 L223.8 138.0 L224.2 138.5 L224.5 139.0 L224.9 139.5 L225.3 140.0 L225.6 140.5 L226.0 141.0 L226.4 141.5 L226.8 142.0 L227.1 142.5 L227.5 143.0 L227.9 143.5 L228.2 144.0 L228.6 144.5 L228.3 145.0 L228.6 145.5 L229.0 146.1 L229.4 146.6 L229.7 147.1 L230.1 147.7 L230.5 148.2 L230.8 148.7 L231.2 149.2 L231.5 149.8 L231.9 150.3 L232.3 150.8 L232.6 151.4 L233.0 151.9 L233.3 152.4 L233.7 153.0 L234.1 153.5 L234.4 154.0 L234.1 154.6 L234.4 155.1 L234.8 155.6 L235.2 156.1 L235.5 156.7 L235.9 157.2 L236.3 157.7 L236.6 158.3 L237.0 158.8 L237.3 159.4 L237.6 159.9 L238.0 160.5 L238.3 161.0 L238.6 161.6 L239.0 162.1 L239.3 162.7 L239.6 163.2 L240.0 163.8 L240.3 164.3 L239.9 164.9 L240.2 165.4 L240.6 166.0 L240.9 166.5 L241.2 167.1 L241.6 167.6 L241.9 168.2 L242.2 168.7 L242.6 169.2 L242.9 169.8 L243.2 170.3 L243.5 170.9 L243.9 171.4 L244.2 172.0 L244.5 172.5 L244.9 173.1 L245.2 173.6 L245.5 174.2 L245.8 174.7 L246.2 175.2 L245.8 175.8 L246.1 176.3 L246.4 176.9 L246.8 177.4 L247.1 178.0 L247.4 178.5 L247.7 179.1 L248.1 179.6 L248.4 180.1 L248.7 180.7 L249.0 181.2 L249.4 181.8 L249.7 182.3 L250.0 182.9 L250.3 183.4 L250.7 183.9 L251.1 184.4 L251.5 184.9 L251.9 185.4 L251.6 185.9 L252.0 186.4 L252.4 186.9 L252.8 187.4 L253.1 187.8 L253.5 188.3 L253.9 188.8 L254.3 189.3 L254.7 189.8 L255.1 190.3 L255.5 190.8 L255.9 191.3 L256.2 191.8 L256.5 192.4 L256.8 192.9 L257.0 193.5 L257.3 194.0 L257.6 194.6 L257.8 195.1 L258.1 195.7 L257.7 196.3 L257.9 196.8 L258.2 197.4 L258.5 197.9 L258.7 198.5 L259.0 199.0 L259.3 199.6 L259.5 200.2 L259.8 200.7 L260.1 201.3 L260.3 201.8 L260.6 202.4 L260.9 202.9 L261.1 203.5 L261.4 204.1 L261.6 204.6 L261.8 205.2 L262.0 205.8 L262.2 206.4 L262.4 206.9 L262.6 207.5 L262.8 208.1 L263.1 208.7 L263.3 209.2 L263.5 209.8 L263.7 210.4 L263.9 211.0 L263.4 211.5 L263.6 212.1 L263.9 212.7 L264.1 213.2 L264.3 213.8 L264.5 214.4 L264.7 215.0 L264.9 215.5 L265.1 216.1 L265.4 216.7 L265.6 217.3 L265.8 217.8 L266.0 218.4 L266.2 219.0 L266.4 219.6 L266.6 220.1 L266.9 220.7 L267.1 221.3 L267.3 221.9 L267.5 222.4 L267.7 223.0 L267.9 223.6 L268.1 224.1 L268.4 224.7 L268.6 225.3 L268.8 225.9 L269.0 226.4 L269.2 227.0 L269.5 227.6 L269.7 228.1 L269.9 228.7 L269.4 229.3 L269.7 229.9 L269.9 230.4 L270.1 231.0 L270.3 231.6 L270.5 232.1 L270.8 232.7 L271.0 233.3 L271.2 233.8 L271.4 234.4 L271.6 235.0 L271.9 235.6 L272.1 236.1 L272.3 236.7 L272.5 237.3 L272.7 237.8 L273.0 238.4 L273.2 239.0 L273.4 239.6 L273.6 240.1 L273.8 240.7 L274.1 241.3 L274.4 241.8 L274.7 242.4 L275.0 242.9 L275.3 243.5 L275.6 244.0 L275.2 244.6 L275.5 245.1 L275.8 245.7 L276.1 246.2 L276.4 246.8 L276.7 247.4 L277.0 247.9 L277.3 248.5 L277.6 249.0 L277.9 249.6 L278.2 250.1 L278.5 250.7 L278.8 251.2 L279.1 251.8 L279.4 252.4 L279.7 252.9 L280.0 253.5 L280.3 254.0 L280.6 254.6 L280.9 255.1 L281.2 255.7 L281.5 256.2 L281.1 256.8 L281.4 257.3 L281.7 257.9 L282.0 258.5 L282.2 259.0 L282.4 259.6 L282.7 260.2 L282.9 260.7 L283.2 261.3 L283.4 261.8 L283.7 262.4 L283.9 263.0 L284.1 263.5 L284.4 264.1 L284.6 264.7 L284.9 265.2 L285.1 265.8 L285.4 266.3 L285.6 266.9 L285.9 267.5 L286.1 268.0 L286.3 268.6 L286.6 269.2 L286.8 269.7 L287.1 270.3 L287.3 270.9 L287.6 271.4 L287.1 272.0 L287.3 272.5 L287.6 273.1 L287.8 273.7 L288.1 274.2 L288.3 274.8 L288.6 275.4 L288.8 275.9 L289.0 276.5 L289.3 277.0 L289.5 277.6 L289.8 278.2 L290.0 278.7 L290.3 279.3 L290.5 279.9 L290.7 280.4 L291.0 281.0 L291.2 281.5 L291.5 282.1 L291.7 282.7 L292.0 283.2 L292.2 283.8 L292.6 284.3 L293.1 284.8 L293.5 285.3 L293.2 285.8 L293.6 286.3 L294.1 286.8 L294.5 287.3 L294.9 287.8 L295.3 288.3 L295.8 288.8 L296.2 289.2 L296.6 289.7 L297.1 290.2 L297.5 290.7 L297.9 291.2 L298.3 291.7 L298.8 292.2 L299.2 292.7 L298.9 293.2 L299.3 293.7 L299.8 294.2 L300.2 294.7 L300.7 295.2 L301.1 295.6 L301.6 296.1 L302.1 296.5 L302.5 297.0 L303.0 297.5 L303.5 297.9 L304.0 298.4 L304.4 298.8 L304.9 299.3 L305.4 299.8 L305.1 300.2 L305.6 300.7 L306.1 301.1 L306.5 301.6 L307.0 302.1 L307.5 302.5 L308.0 303.0 L308.4 303.4 L308.9 303.9 L309.5 304.3 L310.1 304.7 L310.6 305.1 L311.2 305.4 L311.1 305.8 L311.7 306.2 L312.2 306.6 L312.8 307.0 L313.4 307.4 L314.0 307.7 L314.5 308.1 L315.1 308.5 L315.7 308.9 L316.3 309.2 L316.9 309.5 L316.8 309.8 L317.3 310.1 L317.9 310.3 L318.5 310.6 L319.1 310.9 L319.7 311.2 L320.3 311.5 L320.9 311.8 L321.5 312.1 L322.1 312.4 L322.6 312.7 L322.5 313.0 L323.1 313.2 L323.7 313.5 L324.3 313.8 L324.9 314.1 L325.5 314.4 L326.1 314.5 L326.8 314.7 L327.5 314.8 L328.2 315.0 L328.8 315.1 L328.8 315.3 L329.5 315.4 L330.1 315.5 L330.8 315.7 L331.5 315.8 L332.2 316.0 L332.8 316.1 L333.5 316.3 L334.2 316.4 L334.9 316.4 L334.9 316.4 L335.6 316.3 L336.3 316.3 L337.0 316.3 L337.7 316.3 L338.4 316.3 L339.1 316.2 L339.8 316.2 L340.5 316.2 L340.5 316.2 L341.2 316.2 L341.9 316.2 L342.6 316.1 L343.3 316.1 L344.0 316.1 L344.6 315.9 L345.3 315.7 L346.0 315.5 L346.6 315.2 L346.6 315.0 L347.2 314.8 L347.9 314.6 L348.6 314.4 L349.2 314.2 L349.9 314.0 L350.6 313.7 L351.2 313.5 L351.9 313.3 L352.5 313.1 L352.4 312.8 L353.0 312.5 L353.6 312.1 L354.2 311.8 L354.7 311.5 L355.3 311.2 L355.9 310.8 L356.5 310.5 L357.0 310.2 L357.6 309.9 L358.2 309.5 L358.1 309.2 L358.6 308.9 L359.1 308.5 L359.6 308.0 L360.1 307.6 L360.6 307.1 L361.1 306.7 L361.6 306.2 L362.1 305.8 L362.6 305.3 L363.1 304.9 L363.6 304.4 L364.1 304.0 L363.9 303.5 L364.4 303.1 L364.9 302.6 L365.4 302.2 L365.9 301.7 L366.3 301.3 L366.8 300.8 L367.2 300.3 L367.7 299.9 L368.1 299.4 L368.6 298.9 L369.0 298.5 L369.5 298.0 L369.9 297.5 L369.7 297.1 L370.1 296.6 L370.6 296.1 L371.0 295.6 L371.4 295.2 L371.9 294.7 L372.3 294.2 L372.8 293.8 L373.2 293.3 L373.7 292.8 L374.1 292.4 L374.6 291.9 L375.0 291.4 L375.5 291.0 L375.9 290.5 L375.6 290.0 L376.0 289.5 L376.3 289.0 L376.7 288.5 L377.1 288.0 L377.5 287.5 L377.8 287.0 L378.2 286.5 L378.6 286.0 L379.0 285.5 L379.3 285.0 L379.7 284.5 L380.1 284.0 L380.5 283.5 L380.8 283.0 L381.2 282.5 L381.6 282.0 L382.0 281.5 L381.6 281.0 L382.0 280.5 L382.4 280.0 L382.8 279.4 L383.2 278.9 L383.6 278.4 L384.0 277.9 L384.4 277.4 L384.8 276.8 L385.2 276.3 L385.6 275.8 L386.0 275.2 L386.4 274.7 L386.8 274.2 L387.2 273.7 L387.6 273.2 L387.3 272.6 L387.7 272.1 L388.0 271.6 L388.4 271.0 L388.7 270.5 L389.0 270.0 L389.4 269.5 L389.7 268.9 L390.0 268.4 L390.3 267.9 L390.7 267.3 L391.0 266.8 L391.3 266.3 L391.7 265.8 L392.0 265.2 L392.3 264.7 L392.7 264.2 L393.0 263.6 L393.3 263.1 L393.7 262.6 L393.3 262.0 L393.6 261.5 L394.0 261.0 L394.3 260.5 L394.6 259.9 L395.0 259.4 L395.3 258.9 L395.6 258.3 L395.9 257.8 L396.3 257.3 L396.6 256.8 L396.9 256.2 L397.3 255.7 L397.6 255.2 L397.9 254.6 L398.3 254.1 L398.6 253.6 L398.9 253.1 L399.3 252.5 L399.6 252.0 L399.2 251.5 L399.6 250.9 L399.9 250.4 L400.2 249.9 L400.5 249.3 L400.9 248.8 L401.2 248.3 L401.5 247.8 L401.9 247.2 L402.2 246.7 L402.5 246.2 L402.9 245.6 L403.2 245.1 L403.5 244.6 L403.9 244.1 L404.2 243.5 L404.5 243.0 L404.8 242.5 L405.1 241.9 L405.4 241.4 L405.0 240.8 L405.3 240.3 L405.6 239.8 L405.9 239.2 L406.2 238.7 L406.5 238.1 L406.8 237.6 L407.1 237.1 L407.4 236.5 L407.7 236.0 L408.0 235.4 L408.3 234.9 L408.5 234.3 L408.8 233.8 L409.1 233.3 L409.4 232.7 L409.7 232.2 L410.0 231.6 L410.3 231.1 L410.7 230.6 L411.0 230.0 L411.4 229.5 L411.0 229.0 L411.4 228.4 L411.7 227.9 L412.0 227.4 L412.4 226.8 L412.7 226.3 L413.1 225.8 L413.4 225.3 L413.8 224.7 L414.1 224.2 L414.5 223.7 L414.8 223.1 L415.2 222.6 L415.5 222.1 L415.9 221.5 L416.2 221.0 L416.5 220.4 L416.8 219.9 L417.1 219.3 L417.4 218.7 L417.0 218.2 L417.3 217.6 L417.6 217.0 L417.9 216.5 L418.2 215.9 L418.5 215.3 L418.8 214.7 L419.0 214.2 L419.3 213.6 L419.6 213.0 L419.9 212.5 L420.2 211.9 L420.5 211.3 L420.8 210.8 L421.1 210.2 L421.4 209.7 L421.7 209.1 L422.1 208.6 L422.4 208.0 L422.7 207.5 L423.0 206.9 L423.4 206.4 L423.0 205.8 L423.3 205.3 L423.6 204.7 L423.9 204.2 L424.3 203.6 L424.6 203.1 L424.9 202.5 L425.2 202.0 L425.5 201.4 L425.9 200.9 L426.2 200.3 L426.5 199.8 L426.8 199.2 L427.1 198.7 L427.5 198.1 L427.8 197.6 L428.1 197.0 L428.4 196.5 L428.7 195.9 L429.1 195.4 L428.7 194.8 L429.0 194.3 L429.4 193.8 L429.8 193.3 L430.3 192.8 L430.7 192.3 L431.1 191.8 L431.5 191.3 L431.9 190.8 L432.3 190.3 L432.8 189.8 L433.2 189.3 L433.6 188.8 L434.0 188.3 L434.4 187.8 L434.9 187.3 L434.6 186.8 L435.0 186.3 L435.4 185.8 L435.8 185.3 L436.3 184.8 L436.7 184.3 L437.0 183.8 L437.3 183.2 L437.7 182.7 L438.0 182.1 L438.3 181.6 L438.6 181.0 L439.0 180.5 L439.3 179.9 L439.6 179.4 L440.0 178.8 L440.3 178.3 L440.6 177.7 L440.9 177.2 L440.6 176.7 L440.9 176.1 L441.2 175.6 L441.5 175.0 L441.9 174.5 L442.2 173.9 L442.5 173.4 L442.9 172.8 L443.2 172.3 L443.5 171.7 L443.8 171.2 L444.2 170.6 L444.5 170.1 L444.9 169.6 L445.2 169.0 L445.6 168.5 L446.0 168.0 L446.3 167.5 L446.7 166.9 L446.4 166.4 L446.7 165.9 L447.1 165.4 L447.5 164.8 L447.8 164.3 L448.2 163.8 L448.6 163.3 L449.0 162.8 L449.3 162.2 L449.7 161.7 L450.1 161.2 L450.4 160.7 L450.8 160.1 L451.2 159.6 L451.6 159.1 L452.0 158.6 L452.5 158.1 L452.2 157.6 L452.6 157.1 L453.1 156.6 L453.5 156.1 L453.9 155.5 L454.4 155.0 L454.8 154.5 L455.2 154.0 L455.7 153.5 L456.1 153.0 L456.5 152.5 L457.0 152.0 L457.3 151.5 L457.6 150.9 L457.9 150.4 L458.3 149.8 L458.6 149.3 L458.2 148.7 L458.5 148.2 L458.9 147.7 L459.2 147.1 L459.5 146.6 L459.8 146.0 L460.2 145.5 L460.5 144.9 L460.8 144.4 L461.1 143.8 L461.5 143.3 L461.8 142.8 L462.1 142.2 L462.4 141.7 L462.8 141.1 L463.1 140.6 L463.4 140.0 L463.8 139.5 L464.1 139.0 L464.5 138.4 L464.1 137.9 L464.5 137.4 L464.8 136.9 L465.2 136.3 L465.5 135.8 L465.9 135.3 L466.2 134.8 L466.6 134.2 L466.9 133.7 L467.3 133.2 L467.7 132.6 L468.0 132.1 L468.4 131.6 L468.7 131.1 L469.1 130.5 L469.4 130.0 L469.9 129.5 L470.4 129.0 L470.1 128.6 L470.6 128.1 L471.1 127.6 L471.6 127.1 L472.0 126.7 L472.5 126.2 L473.0 125.7 L473.4 125.2 L473.9 124.7 L474.4 124.3 L474.9 123.8 L475.3 123.3 L475.7 122.8 L476.2 122.3 L475.9 121.8 L476.3 121.3 L476.7 120.7 L477.1 120.2 L477.5 119.7 L478.0 119.2 L478.4 118.7 L478.8 118.2 L479.2 117.7 L479.6 117.2 L480.0 116.7 L480.5 116.1 L480.9 115.6 L481.3 115.1 L481.7 114.6 L482.1 114.1 L482.0 113.7 L482.5 113.3 L483.1 112.9 L483.6 112.5 L484.2 112.1 L484.7 111.7 L485.2 111.3 L485.8 110.9 L486.3 110.6 L486.9 110.2 L487.4 109.8 L488.0 109.4 L487.8 109.0 L488.4 108.6 L488.9 108.2 L489.5 107.8 L490.0 107.4 L490.6 107.1 L491.3 106.9 L491.9 106.6 L492.5 106.3 L493.1 106.0 L493.8 105.8 L493.7 105.5 L494.3 105.2 L494.9 104.9 L495.6 104.6 L496.2 104.4 L496.8 104.1 L497.5 103.9 L498.2 103.7 L498.8 103.5 L499.5 103.3 L499.5 103.1 L500.2 102.9 L500.9 102.7 L501.6 102.5 L502.2 102.3 L502.9 102.1 L503.6 101.9 L504.3 101.9 L505.0 101.9 L505.7 101.9 L505.8 101.9 L506.5 101.9 L507.2 101.9 L507.9 102.0 L508.6 102.0 L509.3 102.0 L510.0 102.0 L510.8 102.0 L511.5 102.0 L511.5 102.0 L512.2 102.2 L512.8 102.4 L513.5 102.7 L514.2 102.9 L514.9 103.1 L515.6 103.3 L516.3 103.5 L516.9 103.7 L517.6 104.0 L517.6 104.2 L518.3 104.4 L518.9 104.8 L519.4 105.1 L520.0 105.5 L520.6 105.8 L521.2 106.2 L521.7 106.6 L522.3 106.9 L522.9 107.3 L523.5 107.7 L523.3 108.0 L523.9 108.4 L524.5 108.7 L525.1 109.1 L525.6 109.4 L526.2 109.8 L526.7 110.1 L527.3 110.5 L527.8 110.8 L528.4 111.1 L528.9 111.5 L529.5 111.8 L529.3 112.2 L529.9 112.5 L530.5 112.9 L531.0 113.2 L531.6 113.5 L532.1 113.9 L532.7 114.2 L533.2 114.6 L533.8 114.9 L534.3 115.3 L534.7 115.8 L535.2 116.2 L535.0 116.7 L535.5 117.1 L536.0 117.6 L536.5 118.0 L537.0 118.4 L537.5 118.9 L538.0 119.3 L538.4 119.8 L538.9 120.2 L539.4 120.6 L539.9 121.1 L540.4 121.5 L540.9 122.0 L541.4 122.4 L541.2 122.9 L541.7 123.3 L542.1 123.7 L542.6 124.2 L543.1 124.6 L543.6 125.0 L544.1 125.5 L544.6 125.9 L545.1 126.4 L545.6 126.8 L546.1 127.2 L546.6 127.7 L547.1 128.1 L546.9 128.5 L547.4 129.0 L547.9 129.4 L548.4 129.9 L548.9 130.3 L549.4 130.7 L549.9 131.2 L550.3 131.6 L550.8 132.1 L551.3 132.6 L551.7 133.1 L552.2 133.6 L552.7 134.1 L553.1 134.6 L552.9 135.0 L553.4 135.5 L553.8 136.0 L554.3 136.5 L554.8 137.0 L555.2 137.5 L555.6 138.0 L555.9 138.6 L556.2 139.1 L556.5 139.7 L556.9 140.2 L557.2 140.8 L557.5 141.3 L557.8 141.8 L558.2 142.4 L558.5 142.9 L558.8 143.5 L558.5 144.0 L558.8 144.6 L559.1 145.1 L559.4 145.7 L559.8 146.2 L560.1 146.7 L560.4 147.3 L560.7 147.8 L561.1 148.4 L561.4 148.9 L561.7 149.5 L562.0 150.0 L562.3 150.6 L562.6 151.1 L562.9 151.7 L563.2 152.2 L563.5 152.8 L563.8 153.3 L564.1 153.9 L564.4 154.5 L564.7 155.0 L565.0 155.6 L564.6 156.1 L564.9 156.7 L565.1 157.2 L565.4 157.8 L565.7 158.4 L566.0 158.9 L566.3 159.5 L566.6 160.0 L566.9 160.6 L567.2 161.1 L567.5 161.7 L567.8 162.3 L568.1 162.8 L568.4 163.4 L568.7 164.0 L569.0 164.5 L569.3 165.1 L569.6 165.7 L569.9 166.2 L570.2 166.8 L570.6 167.4 L570.9 168.0 L570.5 168.5 L570.8 169.1 L571.1 169.7 L571.4 170.2 L571.7 170.8 L572.0 171.4 L572.3 171.9 L572.6 172.5 L572.9 173.0 L573.2 173.6 L573.5 174.1 L573.7 174.7 L574.0 175.2 L574.3 175.8 L574.6 176.3 L574.9 176.9 L575.1 177.4 L575.4 178.0 L575.7 178.5 L576.0 179.1 L576.3 179.6 L576.6 180.2 L576.1 180.7 L576.4 181.3 L576.7 181.8 L577.0 182.4 L577.3 182.9 L577.5 183.5 L577.8 184.0 L578.1 184.6 L578.4 185.1 L578.7 185.7 L578.9 186.2 L579.2 186.8 L579.5 187.4 L579.7 187.9 L580.0 188.5 L580.2 189.1 L580.5 189.6 L580.8 190.2 L581.0 190.8 L581.3 191.3 L581.6 191.9 L581.8 192.5 L582.1 193.1 L582.4 193.6 L582.6 194.2 L582.2 194.8 L582.4 195.3 L582.7 195.9 L583.0 196.5 L583.2 197.0 L583.5 197.6 L583.8 198.2 L584.0 198.7 L584.3 199.3 L584.6 199.8 L584.9 200.4 L585.2 200.9 L585.4 201.5 L585.7 202.0 L586.0 202.6 L586.3 203.1 L586.6 203.7 L586.9 204.2 L587.2 204.8 L587.5 205.3 L587.8 205.9 L588.0 206.4 L588.3 206.9 L587.9 207.5 L588.2 208.0 L588.5 208.6 L588.8 209.1 L589.1 209.7 L589.4 210.2 L589.6 210.8 L589.9 211.3 L590.2 211.9 L590.5 212.4 L590.8 213.0 L591.1 213.5 L591.4 214.0 L591.7 214.6 L592.1 215.1 L592.4 215.7 L592.7 216.2 L593.0 216.8 L593.4 217.3 L593.7 217.8 L594.0 218.4 L594.3 218.9 L594.0 219.5 L594.3 220.0 L594.6 220.6 L595.0 221.1 L595.3 221.7 L595.6 222.2 L595.9 222.7 L596.3 223.3 L596.6 223.8 L596.9 224.4 L597.2 224.9 L597.6 225.5 L597.9 226.0 L598.2 226.5 L598.5 227.1 L598.9 227.6 L599.2 228.2 L599.5 228.7 L599.8 229.3 L600.2 229.8 L599.8 230.4 L600.1 230.9 L600.4 231.4 L600.8 232.0 L601.1 232.5 L601.4 233.1 L601.7 233.6 L602.1 234.2 L602.4 234.7 L602.7 235.3 L603.0 235.8 L603.3 236.4 L603.7 236.9 L604.1 237.4 L604.5 237.9 L604.9 238.5 L605.3 239.0 L605.7 239.5 L606.1 240.0 L605.8 240.5 L606.2 241.1 L606.6 241.6 L607.0 242.1 L607.4 242.6 L607.8 243.1 L608.2 243.6 L608.7 244.2 L609.1 244.7 L609.5 245.2 L609.8 245.8 L610.1 246.3 L610.4 246.9 L610.7 247.4 L611.0 248.0 L611.3 248.6 L611.7 249.1 L612.0 249.7 L611.6 250.2 L611.9 250.8 L612.2 251.4 L612.5 251.9 L612.8 252.5 L613.1 253.0 L613.5 253.6 L613.7 254.2 L614.0 254.7 L614.2 255.3 L614.5 255.8 L614.7 256.4 L615.0 256.9 L615.2 257.5 L615.5 258.1 L615.8 258.6 L616.0 259.2 L616.3 259.7 L616.5 260.3 L616.8 260.8 L617.0 261.4 L617.3 262.0 L617.6 262.5 L617.8 263.1 L617.4 263.6 L617.7 264.2 L618.0 264.8 L618.2 265.3 L618.5 265.9 L618.8 266.4 L619.0 267.0 L619.3 267.5 L619.6 268.1 L619.9 268.7 L620.1 269.2 L620.4 269.8 L620.7 270.3 L620.9 270.9 L621.2 271.5 L621.5 272.0 L621.7 272.6 L622.0 273.1 L622.3 273.7 L622.6 274.2 L622.8 274.8 L623.1 275.4 L623.4 275.9 L623.6 276.5 L623.9 277.0 L623.5 277.6 L623.7 278.2 L624.0 278.7 L624.3 279.3 L624.6 279.8 L624.8 280.4 L625.1 280.9 L625.4 281.5 L625.6 282.1 L625.9 282.6 L626.2 283.2 L626.4 283.7 L626.7 284.3 L627.2 284.8 L627.6 285.2 L628.1 285.7 L628.5 286.1 L629.0 286.6 L629.4 287.1 L629.9 287.5 L629.6 288.0 L630.1 288.5 L630.5 288.9 L631.0 289.4 L631.4 289.8 L631.9 290.3 L632.3 290.8 L632.8 291.2 L633.2 291.7 L633.7 292.2 L634.1 292.6 L634.6 293.1 L635.0 293.5 L635.5 294.0 L635.2 294.5 L635.7 294.9 L636.1 295.4 L636.6 295.9 L637.0 296.3 L637.5 296.8 L638.0 297.2 L638.4 297.7 L638.9 298.2 L639.3 298.6 L639.8 299.1 L640.3 299.5 L640.8 300.0 L641.2 300.5 L641.0 300.9 L641.5 301.4 L641.9 301.8 L642.4 302.3 L642.9 302.8 L643.3 303.2 L643.8 303.7 L644.3 304.1 L644.7 304.6 L645.2 305.1 L645.7 305.5 L646.2 306.0 L646.6 306.4 L647.1 306.9 L646.9 307.3 L647.5 307.7 L648.0 308.1 L648.6 308.5 L649.1 308.9 L649.7 309.3 L650.2 309.7 L650.8 310.1 L651.3 310.4 L651.9 310.8 L652.4 311.2 L653.0 311.6 L652.8 312.0 L653.3 312.4 L653.9 312.8 L654.4 313.2 L655.0 313.6 L655.7 313.8 L656.3 314.1 L657.0 314.3 L657.7 314.5 L658.4 314.7 L659.1 315.0 L659.1 315.2 L659.7 315.4 L660.4 315.6 L661.1 315.9 L661.8 316.1 L662.4 316.1 L663.1 316.1 L663.8 316.1 L664.5 316.1 L665.1 316.1 L665.1 316.1 L665.8 316.1 L666.4 316.1 L667.1 316.1 L667.8 316.1 L668.5 316.1 L669.1 316.1 L669.8 316.1 L670.5 316.1 L671.1 315.9 L671.1 315.6 L671.8 315.4 L672.4 315.1 L673.1 314.9 L673.8 314.6 L674.4 314.4 L675.1 314.2 L675.7 313.9 L676.4 313.7 L677.1 313.4 L677.0 313.2 L677.7 312.9 L678.4 312.7 L678.9 312.3 L679.5 311.9 L680.1 311.5 L680.7 311.2 L681.2 310.8 L681.8 310.4 L682.4 310.0 L683.0 309.6 L682.8 309.2 L683.4 308.9 L684.0 308.5 L684.6 308.1 L685.2 307.7 L685.7 307.4 L686.3 307.0 L686.9 306.7 L687.5 306.3 L688.0 306.0 L688.6 305.6 L688.5 305.3 L689.1 304.9 L689.6 304.6 L690.2 304.2 L690.8 303.9 L691.4 303.5 L691.9 303.2 M695.3 240 L698.3 235.4" stroke="#4273ab" stroke-width="1.5" fill="none" stroke-linejoin="round"/>
<path d="M693.5 84.5 V321.6" stroke="#f03030" stroke-width="1.3" fill="none"/>
</svg>
<div class="b" style="left:2px;top:26px;width:752.00px;height:2.00px;background:#f6f6f6"></div>
<div class="b" style="left:23.5px;top:408px;width:138.50px;height:159.50px;background:#fafafa;border:1px solid #f1f1f1;border-radius:5px"></div>
<div class="b" style="left:590.5px;top:410px;width:147.50px;height:204.50px;background:#fafafa;border:1px solid #f1f1f1;border-radius:5px"></div>
<div class="b" style="left:35px;top:439px;width:118.00px;height:26.00px;background:#fff;border:1px solid #abadb3"></div>
<div class="b" style="left:132px;top:440px;width:20.00px;height:24.00px;background:#f1f1f1;border-left:1px solid #abadb3"></div>
<div class="b" style="left:133px;top:451.5px;width:19.00px;height:1.00px;background:#abadb3"></div>
<div class="b" style="left:35px;top:483px;width:118.00px;height:26.00px;background:#fff;border:1px solid #abadb3"></div>
<div class="b" style="left:132px;top:484px;width:20.00px;height:24.00px;background:#f1f1f1;border-left:1px solid #abadb3"></div>
<div class="b" style="left:133px;top:495.5px;width:19.00px;height:1.00px;background:#abadb3"></div>
<div class="b" style="left:34px;top:529px;width:118.00px;height:26.00px;background:#fff;border:1px solid #abadb3"></div>
<div class="b" style="left:134px;top:531px;width:16.00px;height:22.00px;background:#e3e3e3;border:1px solid #adadad"></div>
<div class="b" style="left:274px;top:420px;width:91.00px;height:41.00px;background:#fff;border:1px solid #abadb3"></div>
<div class="b" style="left:349px;top:423px;width:13.00px;height:17.00px;background:#ebebeb;border:1px solid #adadad"></div>
<div class="b" style="left:349px;top:440px;width:13.00px;height:18.00px;background:#ebebeb;border:1px solid #adadad"></div>
<div class="b" style="left:274.5px;top:472.5px;width:87.00px;height:17.50px;background:#f0f0f0"></div>
<div class="b" style="left:274px;top:492px;width:91.00px;height:42.00px;background:#efefef;border:1px solid #d4d4d4"></div>
<div class="b" style="left:349px;top:495px;width:13.00px;height:17.50px;background:#f2f2f2;border:1px solid #d2d2d2"></div>
<div class="b" style="left:349px;top:512.5px;width:13.00px;height:17.50px;background:#f2f2f2;border:1px solid #d2d2d2"></div>
<div class="b" style="left:218.4px;top:490.1px;width:44.50px;height:44.50px;background:#a0a6af;border-radius:3.5px"></div>
<div class="b" style="left:378.4px;top:491px;width:44.50px;height:44.50px;background:#a0a6af;border-radius:3.5px"></div>
<div class="b" style="left:377.2px;top:418.9px;width:120.20px;height:44.50px;background:#6586ac;border-radius:3.5px"></div>
<div class="b" style="left:437.4px;top:490.2px;width:137.90px;height:44.30px;background:#6586ac;border-radius:3.5px"></div>
<div class="b" style="left:602.2px;top:421px;width:119.70px;height:44.00px;background:#54708e;border-radius:3.5px"></div>
<div class="b" style="left:601px;top:492px;width:125.50px;height:42.00px;background:#fff;border:1px solid #abadb3"></div>
<div class="b" style="left:711px;top:495px;width:13.00px;height:17.50px;background:#ebebeb;border:1px solid #adadad"></div>
<div class="b" style="left:711px;top:512.5px;width:13.00px;height:17.50px;background:#ebebeb;border:1px solid #adadad"></div>
<div class="b" style="left:601.5px;top:564px;width:125.00px;height:42.00px;background:#fff;border:1px solid #abadb3"></div>
<div class="b" style="left:711px;top:567px;width:13.00px;height:17.50px;background:#ebebeb;border:1px solid #adadad"></div>
<div class="b" style="left:711px;top:584.5px;width:13.00px;height:17.50px;background:#ebebeb;border:1px solid #adadad"></div>
<div class="t" style="left:75.80px;top:332.04px;font-size:12px;line-height:12px;color:#555;width:27px;text-align:center;letter-spacing:-0.05px">2400</div>
<div class="t" style="left:106.20px;top:332.04px;font-size:12px;line-height:12px;color:#555;width:27px;text-align:center;letter-spacing:-0.05px">2410</div>
<div class="t" style="left:136.60px;top:332.04px;font-size:12px;line-height:12px;color:#555;width:27px;text-align:center;letter-spacing:-0.05px">2420</div>
<div class="t" style="left:167.00px;top:332.04px;font-size:12px;line-height:12px;color:#555;width:27px;text-align:center;letter-spacing:-0.05px">2430</div>
<div class="t" style="left:197.40px;top:332.04px;font-size:12px;line-height:12px;color:#555;width:27px;text-align:center;letter-spacing:-0.05px">2440</div>
<div class="t" style="left:227.80px;top:332.04px;font-size:12px;line-height:12px;color:#555;width:27px;text-align:center;letter-spacing:-0.05px">2450</div>
<div class="t" style="left:258.20px;top:332.04px;font-size:12px;line-height:12px;color:#555;width:27px;text-align:center;letter-spacing:-0.05px">2460</div>
<div class="t" style="left:288.60px;top:332.04px;font-size:12px;line-height:12px;color:#555;width:27px;text-align:center;letter-spacing:-0.05px">2470</div>
<div class="t" style="left:319.00px;top:332.04px;font-size:12px;line-height:12px;color:#555;width:27px;text-align:center;letter-spacing:-0.05px">2480</div>
<div class="t" style="left:349.40px;top:332.04px;font-size:12px;line-height:12px;color:#555;width:27px;text-align:center;letter-spacing:-0.05px">2490</div>
<div class="t" style="left:379.80px;top:332.04px;font-size:12px;line-height:12px;color:#555;width:27px;text-align:center;letter-spacing:-0.05px">2500</div>
<div class="t" style="left:410.20px;top:332.04px;font-size:12px;line-height:12px;color:#555;width:27px;text-align:center;letter-spacing:-0.05px">2510</div>
<div class="t" style="left:440.60px;top:332.04px;font-size:12px;line-height:12px;color:#555;width:27px;text-align:center;letter-spacing:-0.05px">2520</div>
<div class="t" style="left:471.00px;top:332.04px;font-size:12px;line-height:12px;color:#555;width:27px;text-align:center;letter-spacing:-0.05px">2530</div>
<div class="t" style="left:501.40px;top:332.04px;font-size:12px;line-height:12px;color:#555;width:27px;text-align:center;letter-spacing:-0.05px">2540</div>
<div class="t" style="left:531.80px;top:332.04px;font-size:12px;line-height:12px;color:#555;width:27px;text-align:center;letter-spacing:-0.05px">2550</div>
<div class="t" style="left:562.20px;top:332.04px;font-size:12px;line-height:12px;color:#555;width:27px;text-align:center;letter-spacing:-0.05px">2560</div>
<div class="t" style="left:592.60px;top:332.04px;font-size:12px;line-height:12px;color:#555;width:27px;text-align:center;letter-spacing:-0.05px">2570</div>
<div class="t" style="left:623.00px;top:332.04px;font-size:12px;line-height:12px;color:#555;width:27px;text-align:center;letter-spacing:-0.05px">2580</div>
<div class="t" style="left:653.40px;top:332.04px;font-size:12px;line-height:12px;color:#555;width:27px;text-align:center;letter-spacing:-0.05px">2590</div>
<div class="t" style="left:683.80px;top:332.04px;font-size:12px;line-height:12px;color:#555;width:27px;text-align:center;letter-spacing:-0.05px">2600</div>
<div class="t" id="t_turn" style="left:24.98px;top:195.55px;font-size:14.5px;line-height:14.5px;color:#555;transform:rotate(-90deg);transform-origin:center;width:40px;text-align:center;letter-spacing:-0.3px">Turn</div>
<div id="t_title" class="t" style="left:24.50px;top:8.23px;font-size:11.9px;line-height:11.9px;font-weight:400;color:#000;letter-spacing:0.145px;">Friction compensation tuning application</div>
<div id="t_pos" class="t" style="left:24.50px;top:52.29px;font-size:16.2px;line-height:16.2px;font-weight:400;color:#555;letter-spacing:-0.012px;">Position</div>
<div id="t_lgI" class="t" style="left:491.00px;top:52.34px;font-size:12px;line-height:12px;font-weight:400;color:#555;letter-spacing:0.194px;">Ideal</div>
<div id="t_lgP" class="t" style="left:563.00px;top:52.34px;font-size:12px;line-height:12px;font-weight:400;color:#555;letter-spacing:-0.050px;">Planned</div>
<div id="t_lgA" class="t" style="left:662.00px;top:52.34px;font-size:12px;line-height:12px;font-weight:400;color:#555;letter-spacing:0.107px;">Actual</div>
<div id="t_time" class="t" style="left:379.20px;top:349.83px;font-size:14.5px;line-height:14.5px;font-weight:400;color:#555;letter-spacing:0.178px;">Time</div>
<div id="t_rtc" class="t" style="left:41.70px;top:390.59px;font-size:12.3px;line-height:12.3px;font-weight:700;color:#111;letter-spacing:-0.038px;-webkit-text-stroke:0.3px #fff;">Round trip config</div>
<div id="t_pcc" class="t" style="left:596.00px;top:390.59px;font-size:12.3px;line-height:12.3px;font-weight:700;color:#111;letter-spacing:-0.198px;-webkit-text-stroke:0.3px #fff;">Precision control config</div>
<div id="t_amp" class="t" style="left:36.70px;top:424.09px;font-size:12.3px;line-height:12.3px;font-weight:400;color:#111;letter-spacing:0.099px;">Amplitude [Rev]</div>
<div id="t_v001" class="t" style="left:43.00px;top:446.54px;font-size:12px;line-height:12px;font-weight:400;color:#111;letter-spacing:-0.215px;">0.01</div>
<div id="t_frq" class="t" style="left:36.50px;top:467.59px;font-size:12.3px;line-height:12.3px;font-weight:400;color:#111;letter-spacing:-0.064px;">Frequency [Hz]</div>
<div id="t_v025" class="t" style="left:43.00px;top:489.84px;font-size:12px;line-height:12px;font-weight:400;color:#111;letter-spacing:-0.215px;">0.25</div>
<div id="t_sig" class="t" style="left:35.70px;top:512.59px;font-size:12.3px;line-height:12.3px;font-weight:400;color:#111;letter-spacing:0.014px;">Signal type</div>
<div id="t_sine" class="t" style="left:38.70px;top:535.29px;font-size:12.3px;line-height:12.3px;font-weight:400;color:#111;letter-spacing:-0.224px;">Sine Wave</div>
<div id="t_bw" class="t" style="left:275.70px;top:403.79px;font-size:12.3px;line-height:12.3px;font-weight:400;color:#111;letter-spacing:0.252px;">Bandwidth [rad/s]</div>
<div id="t_v40" class="t" style="left:279.30px;top:424.81px;font-size:30px;line-height:30px;font-weight:400;color:#000;transform-origin:0 0;transform:scaleX(0.9648);-webkit-text-stroke:0.4px #fff;">40</div>
<div id="t_dist" class="t" style="left:275.70px;top:475.79px;font-size:12.3px;line-height:12.3px;font-weight:400;color:#a0a0a0;letter-spacing:0.039px;">Distance [Turn]</div>
<div id="t_v1" class="t" style="left:281.00px;top:497.31px;font-size:30px;line-height:30px;font-weight:400;color:#999;transform-origin:0 0;transform:scaleX(0.8749);-webkit-text-stroke:0.4px #efefef;">1</div>
<div id="t_servo" class="t" style="left:420.00px;top:433.55px;font-size:16.6px;line-height:16.6px;font-weight:700;color:#fff;transform-origin:0 0;transform:scaleX(0.9294);-webkit-text-stroke:0.4px #6586ac;">Servo on</div>
<div id="t_round" class="t" style="left:477.70px;top:505.25px;font-size:16.6px;line-height:16.6px;font-weight:700;color:#fff;transform-origin:0 0;transform:scaleX(0.9419);-webkit-text-stroke:0.4px #6586ac;">Round trip</div>
<div id="t_enable" class="t" style="left:642.70px;top:435.25px;font-size:16.6px;line-height:16.6px;font-weight:700;color:#fff;transform-origin:0 0;transform:scaleX(0.9151);-webkit-text-stroke:0.4px #54708e;">Enable</div>
<div id="t_posb" class="t" style="left:602.50px;top:475.79px;font-size:12.3px;line-height:12.3px;font-weight:400;color:#111;letter-spacing:0.105px;">Pos bound [Rev]</div>
<div id="t_v00100" class="t" style="left:606.80px;top:497.31px;font-size:30px;line-height:30px;font-weight:400;color:#000;transform-origin:0 0;transform:scaleX(0.9091);-webkit-text-stroke:0.4px #fff;">0.00100</div>
<div id="t_swg" class="t" style="left:603.20px;top:548.59px;font-size:12.3px;line-height:12.3px;font-weight:400;color:#111;letter-spacing:0.072px;">Switching gain (0~1)</div>
<div id="t_v095" class="t" style="left:607.20px;top:569.50px;font-size:30px;line-height:30px;font-weight:400;color:#000;transform-origin:0 0;transform:scaleX(0.9111);-webkit-text-stroke:0.4px #fff;">0.95</div>
<svg id="icons" width="754" height="619" viewBox="0 0 754 619" style="position:absolute;left:0;top:0">
<!-- app icon -->
<rect x="5.3" y="5.7" width="14.8" height="10" fill="#12326b"/>
<text x="12.75" y="13.9" font-family="Liberation Sans, sans-serif" font-size="7.2" font-weight="700" fill="#b9c6df" text-anchor="middle" textLength="13.2" lengthAdjust="spacingAndGlyphs">WPC</text>
<rect x="6.20" y="17.1" width="1.35" height="2.5" fill="#777" opacity="0.75"/><rect x="8.15" y="17.1" width="1.35" height="2.5" fill="#777" opacity="0.75"/><rect x="10.10" y="17.1" width="1.35" height="2.5" fill="#777" opacity="0.75"/><rect x="12.05" y="17.1" width="1.35" height="2.5" fill="#777" opacity="0.75"/><rect x="14.00" y="17.1" width="1.35" height="2.5" fill="#777" opacity="0.75"/><rect x="15.95" y="17.1" width="1.35" height="2.5" fill="#777" opacity="0.75"/><rect x="17.90" y="17.1" width="1.35" height="2.5" fill="#777" opacity="0.75"/>
<!-- close X -->
<path d="M741.3 9 L750.8 17.9 M750.8 9 L741.3 17.9" stroke="#222" stroke-width="1" fill="none"/>
<!-- legend swatches -->
<rect x="529.8" y="48.4" width="25.6" height="18.6" fill="#fafafa"/>
<rect x="619" y="48.4" width="25.6" height="18.6" fill="#fafafa"/>
<rect x="707.4" y="48.4" width="25.6" height="18.6" fill="#fafafa"/>
<path d="M531 63 L538.8 51.2 L546.9 63 L554.6 51.2" stroke="#4a8ec6" stroke-width="1.5" fill="none"/>
<path d="M619.7 63 L627.7 51.2 L635.9 63 L643.8 51.2" stroke="#d25c5c" stroke-width="1.5" fill="none"/>
<path d="M708.4 63 L722.4 50.7 L732.1 59.6" stroke="#52b848" stroke-width="2.5" fill="none"/>
<!-- plus/minus -->
<path d="M139.6 446.1 H145.2 M142.4 443.3 V448.9 M139.6 458.6 H145.2" stroke="#7a7a7a" stroke-width="1.7" fill="none"/>
<path d="M139.6 489.6 H145.2 M142.4 486.8 V492.4 M139.6 502.1 H145.2" stroke="#7a7a7a" stroke-width="1.7" fill="none"/>
<!-- combo chevron -->
<path d="M137.5 540.3 L141.4 543.9 L145.3 540.3" stroke="#505050" stroke-width="1" fill="none"/>
<!-- spinner triangles: bandwidth -->
<path d="M355.6 429.6 L358.6 432.6 H352.6 Z M352.6 447 H358.6 L355.6 450 Z" fill="#111"/>
<!-- distance (disabled) -->
<path d="M355.6 501.6 L358.6 504.6 H352.6 Z M352.6 519 H358.6 L355.6 522 Z" fill="#8a8a8a"/>
<!-- pos bound -->
<path d="M717.5 501.8 L720.5 504.8 H714.5 Z M714.5 519.2 H720.5 L717.5 522.2 Z" fill="#111"/>
<!-- switching gain -->
<path d="M717.5 573.8 L720.5 576.8 H714.5 Z M714.5 591.2 H720.5 L717.5 594.2 Z" fill="#111"/>
<!-- left arrow -->
<path d="M248.1 512.3 H233.6 M241 505.4 L233.6 512.3 L241 519.3" stroke="#f6f6f6" stroke-width="1.9" fill="none"/>
<!-- right arrow -->
<path d="M392.8 513.3 H407.8 M400 506.5 L407.8 513.3 L400 520.3" stroke="#f6f6f6" stroke-width="1.9" fill="none"/>
<!-- power -->
<path d="M394.9 434.8 A8 8 0 1 0 404.7 434.8 M399.8 432.5 V441.6" stroke="#fff" stroke-width="1.9" fill="none"/>
<!-- refresh -->
<path d="M464.5 507.7 A6.9 6.9 0 1 0 466.1 514.9" stroke="#fff" stroke-width="1.8" fill="none"/>
<path d="M467.3 505.3 V511.1 H461.3 Z" fill="#fff"/>
<!-- play -->
<path d="M620 436.2 V450 L631.1 443.1 Z" fill="#fff"/>
</svg>

</body></html>
